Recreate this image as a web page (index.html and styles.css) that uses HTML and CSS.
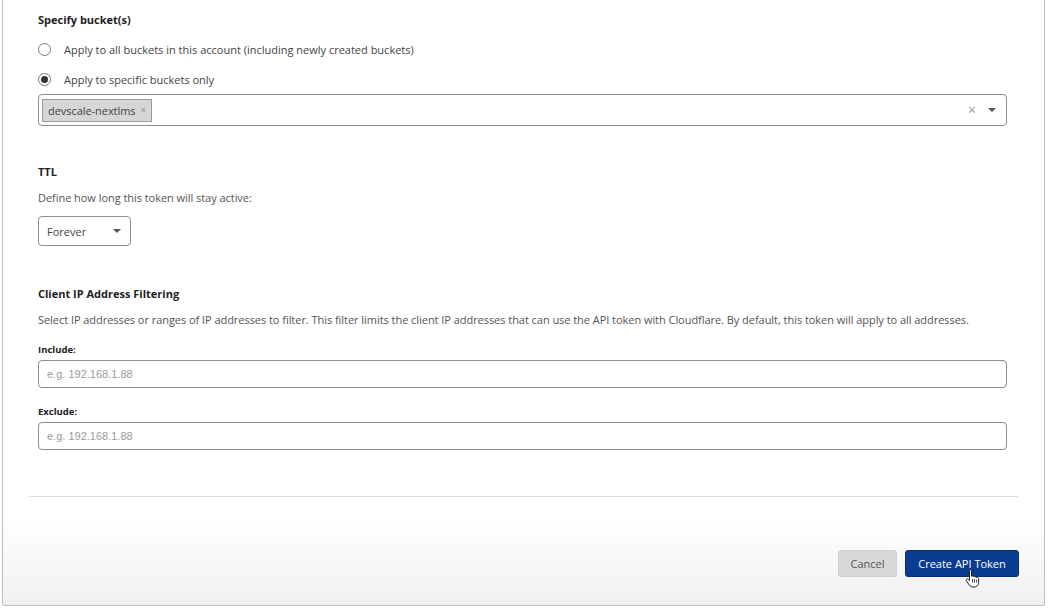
FILE: index.html
```html
<!DOCTYPE html>
<html>
<head>
<meta charset="utf-8">
<link rel="stylesheet" href="styles.css">
</head>
<body>
<div class="card">
  <div class="content">
    <section class="sec sec-buckets">
      <h3 class="title">Specify bucket(s)</h3>
      <label class="radio-row"><span class="radio"></span><span>Apply to all buckets in this account (including newly created buckets)</span></label>
      <label class="radio-row"><span class="radio checked"></span><span>Apply to specific buckets only</span></label>
      <div class="multi">
        <span class="tag">devscale-nextlms <span class="tag-x">×</span></span>
        <span class="multi-spacer"></span>
        <span class="clear">×</span>
        <span class="caret"></span>
      </div>
    </section>
    <section class="sec sec-ttl">
      <h3 class="title">TTL</h3>
      <p class="desc">Define how long this token will stay active:</p>
      <div class="select"><span>Forever</span><span class="caret"></span></div>
    </section>
    <section class="sec sec-ip">
      <h3 class="title">Client IP Address Filtering</h3>
      <p class="desc">Select IP addresses or ranges of IP addresses to filter. This filter limits the client IP addresses that can use the API token with Cloudflare. By default, this token will apply to all addresses.</p>
      <div class="field-label">Include:</div>
      <div class="input">e.g. 192.168.1.88</div>
      <div class="field-label">Exclude:</div>
      <div class="input">e.g. 192.168.1.88</div>
    </section>
  </div>
  <div class="divider"></div>
  <div class="footer">
    <button class="btn btn-cancel">Cancel</button>
    <button class="btn btn-primary">Create API Token</button>
    <svg class="cursor" width="16" height="20" viewBox="0 0 16 20">
      <path d="M5 1.5c.8 0 1.5.7 1.5 1.5v5.2c.3-.2.7-.3 1-.3.7 0 1.2.4 1.4.9.3-.2.6-.3 1-.3.7 0 1.2.4 1.4 1 .2-.1.5-.2.8-.2.9 0 1.5.7 1.5 1.5v3.7c0 2.6-2 4.5-4.5 4.5H8c-1.5 0-2.7-.7-3.6-1.9L1.4 13c-.4-.7-.2-1.5.4-1.9.6-.4 1.4-.3 1.8.3l.9 1.1V3c0-.8.7-1.5 1.5-1.5z" fill="#fff" stroke="#222" stroke-width="1"/>
      <path d="M7.5 11v3.5M9.5 11v3.5M11.5 11.5v3" stroke="#222" stroke-width=".8"/>
    </svg>
  </div>
</div>
</body>
</html>
```
FILE: styles.css
```css
* { box-sizing: border-box; }
html, body { margin: 0; padding: 0; background: #fff; }
body {
  font-family: "Open Sans", "Noto Sans", sans-serif;
  font-size: 11px;
  color: #333;
  width: 1050px;
  height: 608px;
  overflow: hidden;
}
.card {
  margin-left: 2px;
  width: 1043px;
  height: 606px;
  border: 1px solid #bdbdbd;
  border-top: none;
  border-radius: 0 0 3px 3px;
  background: linear-gradient(#fff 0, #fff 518px, #f0f0f0 606px);
  display: flex;
  flex-direction: column;
}
.content { padding: 12px 37px 0 35px; }
.sec { display: flex; flex-direction: column; }
.title {
  margin: 0;
  font-size: 11px;
  font-weight: 700;
  color: #222;
  line-height: 16px;
}
.radio-row {
  display: flex;
  align-items: center;
  gap: 13px;
  height: 16px;
  margin-top: 13px;
  color: #444;
}
.radio-row + .radio-row { margin-top: 14px; }
.radio {
  width: 13px; height: 13px;
  border: 1px solid #777;
  border-radius: 50%;
  background: #fff;
  display: flex; align-items: center; justify-content: center;
}
.radio.checked::after {
  content: "";
  width: 7px; height: 7px;
  border-radius: 50%;
  background: #333;
}
.multi {
  margin-top: 7px;
  height: 32px;
  border: 1px solid #8c8c8c;
  border-radius: 4px;
  display: flex;
  align-items: center;
  padding: 0 10px 0 3px;
}
.tag {
  height: 23px;
  background: #d6d6d6;
  border: 1px solid #9a9a9a;
  padding: 0 5px 0 5px;
  display: flex; align-items: center; gap: 5px;
  color: #444;
  letter-spacing: -0.05px;
}
.tag-x { color: #999; font-size: 10px; }
.multi-spacer { flex: 1; }
.clear { color: #999; font-size: 14px; margin-right: 12px; line-height: 1; }
.caret {
  width: 0; height: 0;
  border-left: 4px solid transparent;
  border-right: 4px solid transparent;
  border-top: 4px solid #555;
}
.sec-ttl { margin-top: 38px; }
.desc { margin: 10px 0 0; color: #555; line-height: 16px; letter-spacing: -0.045px; }
.select {
  margin-top: 10px;
  width: 93px;
  height: 30px;
  border: 1px solid #8c8c8c;
  border-radius: 4px;
  display: flex; align-items: center; justify-content: space-between;
  padding: 0 9px 0 8px;
  color: #444;
}
.sec-ip { margin-top: 40px; }
.field-label {
  margin-top: 15px;
  font-size: 9.5px;
  font-weight: 700;
  color: #222;
  line-height: 13px;
}
.field-label + .input { margin-top: 4px; }
.input + .field-label { margin-top: 17px; }
.input {
  height: 28px;
  border: 1px solid #8c8c8c;
  border-radius: 4px;
  display: flex; align-items: center;
  padding: 0 8px;
  font-family: "Liberation Sans", Arial, sans-serif;
  font-size: 11px;
  color: #9a9a9a;
}
.divider {
  margin: 46px 26px 0 26px;
  border-top: 1px solid #dcdcdc;
}
.footer {
  margin-top: 53px;
  display: flex;
  justify-content: flex-end;
  gap: 8px;
  padding-right: 25px;
  position: relative;
}
.btn {
  height: 27px;
  border-radius: 3px;
  font-family: "Open Sans", "Noto Sans", sans-serif;
  font-size: 11px;
  border: none;
  padding: 0;
}
.btn-cancel { width: 59px; background: #d8d8d8; color: #555; border: 1px solid #cfcfcf; }
.btn-primary { width: 114px; background: #0a3d91; color: #fff; border: 1px solid #07306f; }
.cursor { position: absolute; left: 962px; top: 18px; }
```
